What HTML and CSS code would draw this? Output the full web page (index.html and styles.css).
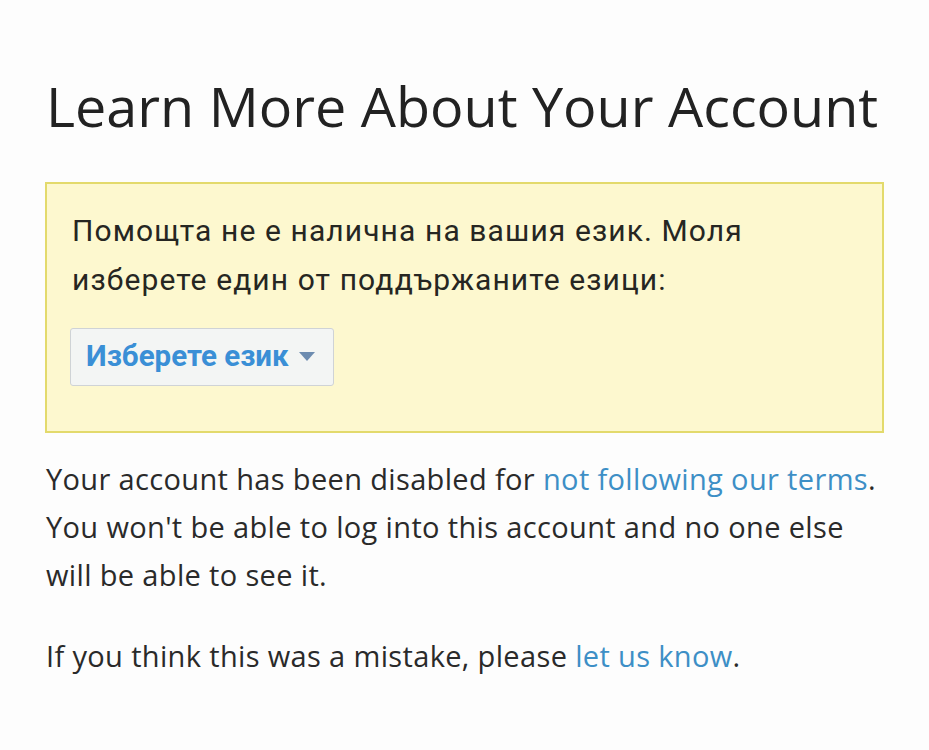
FILE: index.html
```html
<!DOCTYPE html>
<html lang="en">
<head>
<meta charset="utf-8">
<link rel="stylesheet" href="styles.css">
<title>Learn More About Your Account</title>
</head>
<body>
<main class="page">
  <h1 class="title">Learn More About Your Account</h1>
  <div class="notice">
    <p class="notice-text">Помощта не е налична на вашия език. Моля изберете един от поддържаните езици:</p>
    <button class="lang-btn" type="button">Изберете език <span class="caret"></span></button>
  </div>
  <p class="body-text">Your account has been disabled for <a href="#" class="link">not following our terms</a>. You won't be able to log into this account and no one else will be able to see it.</p>
  <p class="body-text">If you think this was a mistake, please <a href="#" class="link">let us know</a>.</p>
</main>
</body>
</html>
```
FILE: styles.css
```css
html, body {
  margin: 0;
  padding: 0;
  background: #fdfdfd;
}
.page {
  width: 839px;
  padding: 70px 0 0 45px;
  font-family: "Open Sans", "Liberation Sans", sans-serif;
  color: #2a2a2a;
}
.title {
  margin: 0 0 0 1px;
  font-weight: 400;
  font-size: 55.7px;
  line-height: 70px;
  color: #222;
  white-space: nowrap;
}
.notice {
  margin-top: 42px;
  border: 2px solid #e3da6c;
  background: #fdf8cf;
  padding: 22px 60px 45px 25px;
}
.notice-text {
  margin: 0;
  font-family: Roboto, "Noto Sans", sans-serif;
  font-size: 30px;
  letter-spacing: 1.1px;
  line-height: 49px;
  color: #262622;
}
.lang-btn {
  margin: 24px 0 0 -2px;
  height: 58px;
  padding: 0 18px 2px 15px;
  border: 1.5px solid #cfd3d6;
  border-radius: 3px;
  background: #f3f5f4;
  font-family: Roboto, "Noto Sans", sans-serif;
  font-weight: 700;
  font-size: 29.5px;
  color: #3a8fd6;
  display: flex;
  align-items: center;
  gap: 10px;
}
.caret {
  width: 0;
  height: 0;
  border-left: 8px solid transparent;
  border-right: 8px solid transparent;
  border-top: 9px solid #6d8cb0;
}
.body-text {
  margin: 22px 0 0 1px;
  font-size: 29px;
  letter-spacing: 0.35px;
  line-height: 48px;
}
.body-text + .body-text {
  margin-top: 33px;
}
.link {
  color: #3d8fc6;
  text-decoration: none;
}
```
